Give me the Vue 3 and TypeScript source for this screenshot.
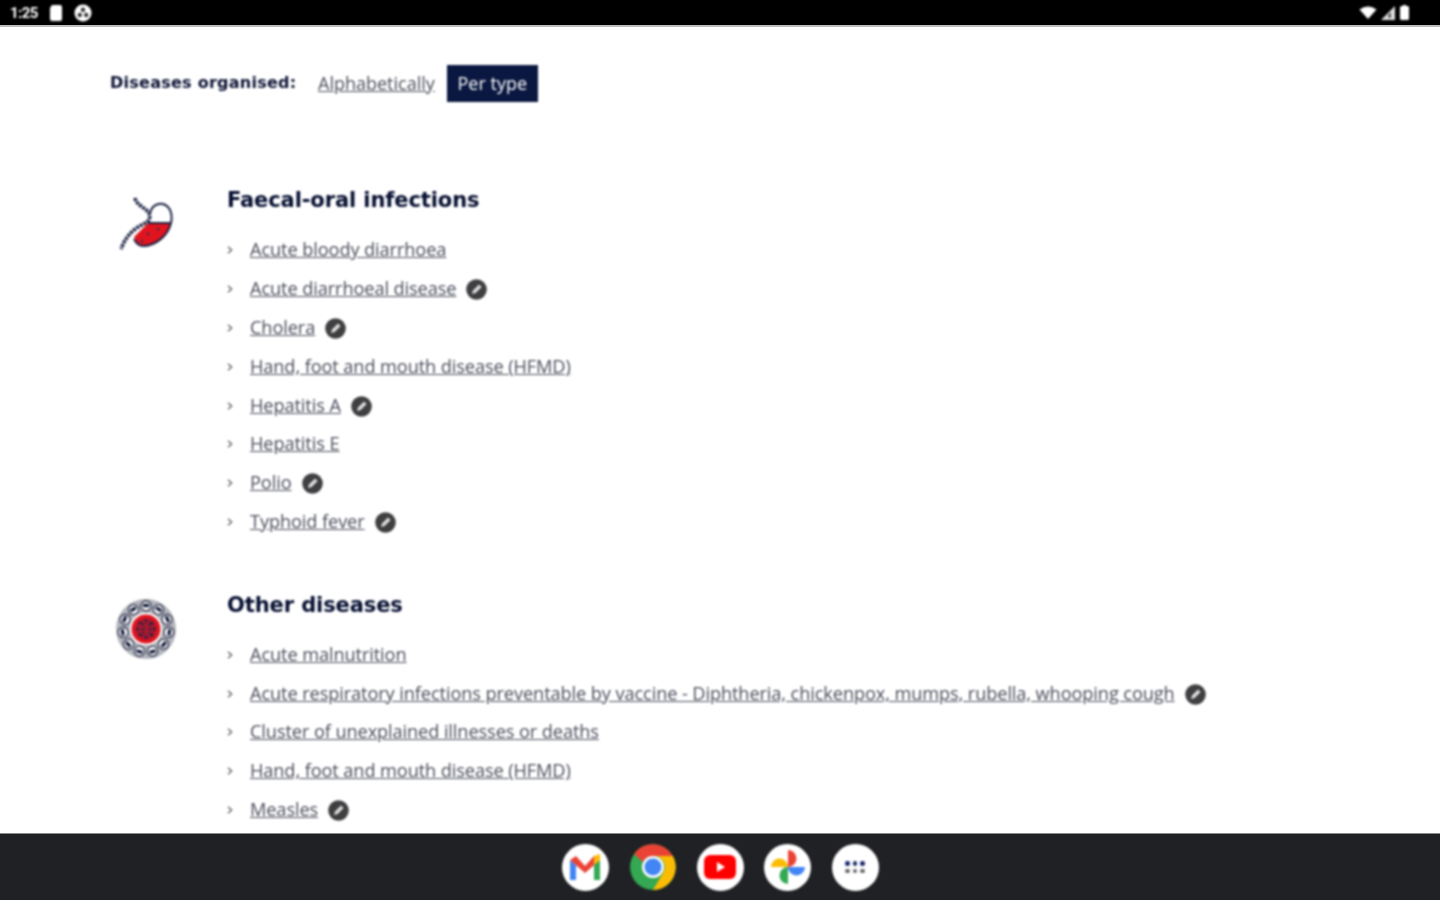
<script setup lang="ts">
interface Disease { name: string; badge?: boolean }
interface Section { title: string; kind: 'stomach' | 'virus'; items: Disease[] }

const sections: Section[] = [
  {
    title: 'Faecal-oral infections',
    kind: 'stomach',
    items: [
      { name: 'Acute bloody diarrhoea' },
      { name: 'Acute diarrhoeal disease', badge: true },
      { name: 'Cholera', badge: true },
      { name: 'Hand, foot and mouth disease (HFMD)' },
      { name: 'Hepatitis A', badge: true },
      { name: 'Hepatitis E' },
      { name: 'Polio', badge: true },
      { name: 'Typhoid fever', badge: true },
    ],
  },
  {
    title: 'Other diseases',
    kind: 'virus',
    items: [
      { name: 'Acute malnutrition' },
      { name: 'Acute respiratory infections preventable by vaccine - Diphtheria, chickenpox, mumps, rubella, whooping cough', badge: true },
      { name: 'Cluster of unexplained illnesses or deaths' },
      { name: 'Hand, foot and mouth disease (HFMD)' },
      { name: 'Measles', badge: true },
    ],
  },
]

const lumps = Array.from({ length: 11 }, (_, i) => (i * 360) / 11)
const innerDots = Array.from({ length: 8 }, (_, i) => (i * 360) / 8)
const dots = ['#1a2a6c', '#1a2a6c', '#1a2a6c', '#666', '#666', '#666']
</script>

<template>
  <div class="screen">
    <header class="status">
      <div class="status-left">
        <span class="time">1:25</span>
        <svg class="sd" width="14" height="16" viewBox="0 0 14 16"><path d="M3 0h8a2 2 0 0 1 2 2v12a2 2 0 0 1-2 2H3a2 2 0 0 1-2-2V3z" fill="#fff" /></svg>
        <svg class="vpn" width="18" height="18" viewBox="0 0 18 18">
          <circle cx="9" cy="9" r="8.500" fill="#fff" />
          <circle cx="9" cy="5.800" r="2.200" fill="#333" />
          <circle cx="5.800" cy="11" r="2.200" fill="#333" />
          <circle cx="12.200" cy="11" r="2.200" fill="#333" />
        </svg>
      </div>
      <div class="status-right">
        <svg width="18" height="13" viewBox="0 0 17 13"><path d="M0 3.500Q8.500-2.500 17 3.500L8.500 13z" fill="#fff" /></svg>
        <svg width="14" height="14" viewBox="0 0 13 13"><path d="M13 0v13H0z" fill="#ddd" /><path d="M9 6v5H7V8z" fill="#333" /></svg>
        <svg width="11" height="15" viewBox="0 0 9 15"><path d="M3 0h3v1h1.500A1.500 1.500 0 0 1 9 2.500V13.500A1.500 1.500 0 0 1 7.500 15h-6A1.500 1.500 0 0 1 0 13.500V2.500A1.500 1.500 0 0 1 1.500 1H3z" fill="#fff" /></svg>
      </div>
    </header>

    <main class="page">
      <div class="filter">
        <strong class="filter-label">Diseases organised:</strong>
        <a class="filter-link">Alphabetically</a>
        <span class="filter-active">Per type</span>
      </div>

      <section v-for="s in sections" :key="s.title" class="group">
        <div class="group-icon">
          <svg v-if="s.kind === 'stomach'" class="stomach" width="56" height="56" viewBox="0 0 56 56" fill="none">
            <path d="M30 27H53C52 39 39 50 25 50 21 50 18 46 16 41z" fill="#e0141f" />
            <path d="M17 2C18 7 23 10 27 13 31 16 33 19 31 24 29 27 22 29 16 34 10 39 6 45 3 53" stroke="#1c2444" stroke-width="3.600" stroke-dasharray="3 1" />
            <path d="M32 18C33 10 39 7 45 8 52 10 55 18 53 27 50 40 37 50 25 50 21 50 18 47 16 43" stroke="#1c2444" stroke-width="2" />
            <path d="M30 27H53" stroke="#1c2444" stroke-width="2" />
            <circle cx="30" cy="38" r="1.200" fill="#27304f" /><circle cx="40" cy="33" r="1.200" fill="#27304f" /><circle cx="24" cy="45" r="1.200" fill="#27304f" />
          </svg>
          <svg v-else class="virus" width="64" height="64" viewBox="0 0 64 64" fill="none">
            <circle cx="32" cy="32" r="22" stroke="#b4b6be" stroke-width="16" />
            <g v-for="a in lumps" :key="a" :transform="`rotate(${a} 32 32)`">
              <circle cx="32" cy="9" r="5" fill="#fff" stroke="#4c5064" stroke-width="1.800" />
              <path d="M29 8.500h6" stroke="#10183a" stroke-width="3.200" />
              <circle cx="32" cy="17" r="1.600" fill="#10183a" transform="rotate(16 32 32)" />
            </g>
            <circle cx="32" cy="32" r="16.500" fill="#fff" />
            <circle cx="32" cy="32" r="14.500" fill="#e0141f" />
            <circle cx="32" cy="32" r="10.500" fill="#a01a30" />
            <circle v-for="a in innerDots" :key="a" :transform="`rotate(${a} 32 32)`" cx="32" cy="23.500" r="1.300" fill="#1b2148" />
            <path d="M29 26V38M36 26V38" stroke="#1b2148" stroke-width="1.400" stroke-dasharray="2.500 2.500" />
          </svg>
        </div>
        <div class="group-body">
          <h2 class="group-title">{{ s.title }}</h2>
          <ul class="list">
            <li v-for="d in s.items" :key="d.name" class="item">
              <svg class="chev" width="6" height="8" viewBox="0 0 6 8" fill="none"><path d="M1 .8 4.600 4 1 7.200" stroke="#666" stroke-width="1.400" /></svg>
              <a class="link">{{ d.name }}</a>
              <svg v-if="d.badge" class="badge" width="21" height="21" viewBox="0 0 21 21">
                <circle cx="10.500" cy="10.500" r="10.300" fill="#3f3f41" />
                <path d="M6 15l1-3.600 6-6 2.600 2.600-6 6z" fill="#ddd" />
              </svg>
            </li>
          </ul>
        </div>
      </section>
    </main>

    <footer class="dock">
      <div class="app">
        <svg width="34" height="28" viewBox="0 0 34 28">
          <path d="M2 7V27H8V12z" fill="#4285f4" />
          <path d="M26 12V27H32V7z" fill="#34a853" />
          <path d="M2 7 8 3 17 13 26 3 32 7 17 20z" fill="#ea4335" />
          <path d="M26 3 32 1V7L26 12z" fill="#fbbc04" />
        </svg>
      </div>
      <div class="app chrome">
        <svg width="46" height="46" viewBox="0 0 46 46">
          <circle cx="23" cy="23" r="23" fill="#34a853" />
          <path d="M23 0A23 23 0 0 1 43 12H23A11 11 0 0 0 13 18L4 10A23 23 0 0 1 23 0z" fill="#ea4335" />
          <path d="M43 12A23 23 0 0 1 23 46L33 29A11 11 0 0 0 23 12z" fill="#fbbc04" />
          <circle cx="23" cy="23" r="11" fill="#fff" />
          <circle cx="23" cy="23" r="8.500" fill="#4285f4" />
        </svg>
      </div>
      <div class="app">
        <svg width="32" height="24" viewBox="0 0 32 24">
          <rect width="32" height="24" rx="6" fill="#f00" />
          <path d="M13 7l8 5-8 5z" fill="#fff" />
        </svg>
      </div>
      <div class="app">
        <svg width="36" height="36" viewBox="0 0 36 36">
          <path d="M18 18V1A8.500 8.500 0 0 1 18 18z" fill="#ea4335" />
          <path d="M18 18H35A8.500 8.500 0 0 1 18 18z" fill="#4285f4" />
          <path d="M18 18V35A8.500 8.500 0 0 1 18 18z" fill="#34a853" />
          <path d="M18 18H1A8.500 8.500 0 0 1 18 18z" fill="#fbbc04" />
        </svg>
      </div>
      <div class="app">
        <div class="grid-dots">
          <i v-for="(c, i) in dots" :key="i" class="grid-dot" :style="{ background: c }"></i>
        </div>
      </div>
    </footer>
  </div>
</template>

<style scoped>
.screen {
  width: 1440px;
  height: 900px;
  display: flex;
  flex-direction: column;
  overflow: hidden;
  background: #fff;
}
.status {
  flex: none;
  height: 25px;
  background: #000;
  border-bottom: 2px solid #bdbdbd;
  box-sizing: content-box;
  display: flex;
  justify-content: space-between;
  align-items: center;
  padding: 0 30px 0 10px;
  color: #fff;
}
.status-left > *, .status-right > * { filter: blur(0.8px); }
.status-left, .status-right { display: flex; align-items: center; }
.status-left { gap: 9px; }
.status-right { gap: 4px; }
.time { font: 700 15px "Roboto", sans-serif; letter-spacing: -0.6px; width: 30px; }
.vpn { margin-left: 2px; }
.page {
  flex: 1;
  min-height: 0;
  overflow: hidden;
  padding: 38px 0 0 110px;
  box-sizing: border-box;
  font-family: "Open Sans", sans-serif;
  filter: blur(0.8px);
}
.filter {
  display: flex;
  align-items: center;
  height: 37px;
  margin-bottom: 83px;
}
.filter-label {
  font: 700 16px "DejaVu Sans", sans-serif;
  letter-spacing: 0.25px;
  color: #0a1233;
  width: 208px;
  margin-top: -2px;
}
.filter-link {
  font-size: 18px;
  color: #4a4d5b;
  text-decoration: underline;
  width: 129px;
  margin-top: -2px;
}
.filter-active {
  background: #0a1740;
  color: #fff;
  font-size: 18px;
  height: 37px;
  line-height: 37px;
  padding: 0 10.500px;
}
.group {
  display: flex;
  margin-bottom: 49px;
}
.group-icon {
  flex: none;
  width: 117px;
  padding: 11px 0 0 8px;
  box-sizing: border-box;
}
.virus { margin: -4px 0 0 -4px; }
.group-title {
  margin: 0;
  font: 700 21px/30px "DejaVu Sans", sans-serif;
  letter-spacing: -0.1px;
  color: #050e30;
  height: 30px;
}
.list {
  list-style: none;
  margin: 14.700px 0 0;
  padding: 0;
}
.item {
  display: flex;
  align-items: center;
  height: 38.860px;
}
.chev { flex: none; margin: 2px 17px 0 0; }
.link {
  font-size: 18.200px;
  letter-spacing: -0.1px;
  color: #4a4d5b;
  text-decoration: underline;
  white-space: nowrap;
}
.badge { flex: none; margin: 3px 0 0 10px; }
.dock {
  flex: none;
  height: 67px;
  background: #202124;
  border-top: 1px solid #888;
  box-sizing: border-box;
  display: flex;
  justify-content: center;
  align-items: center;
  gap: 20.500px;
}
.app {
  width: 47px;
  height: 47px;
  border-radius: 50%;
  background: #fff;
  display: flex;
  align-items: center;
  justify-content: center;
  overflow: hidden;
  filter: blur(0.8px);
}
.chrome { background: none; }
.grid-dots {
  display: grid;
  grid-template-columns: repeat(3, 4.500px);
  gap: 3px 3px;
}
.grid-dot {
  display: block;
  width: 4.500px;
  height: 4.500px;
  border-radius: 50%;
}
</style>
